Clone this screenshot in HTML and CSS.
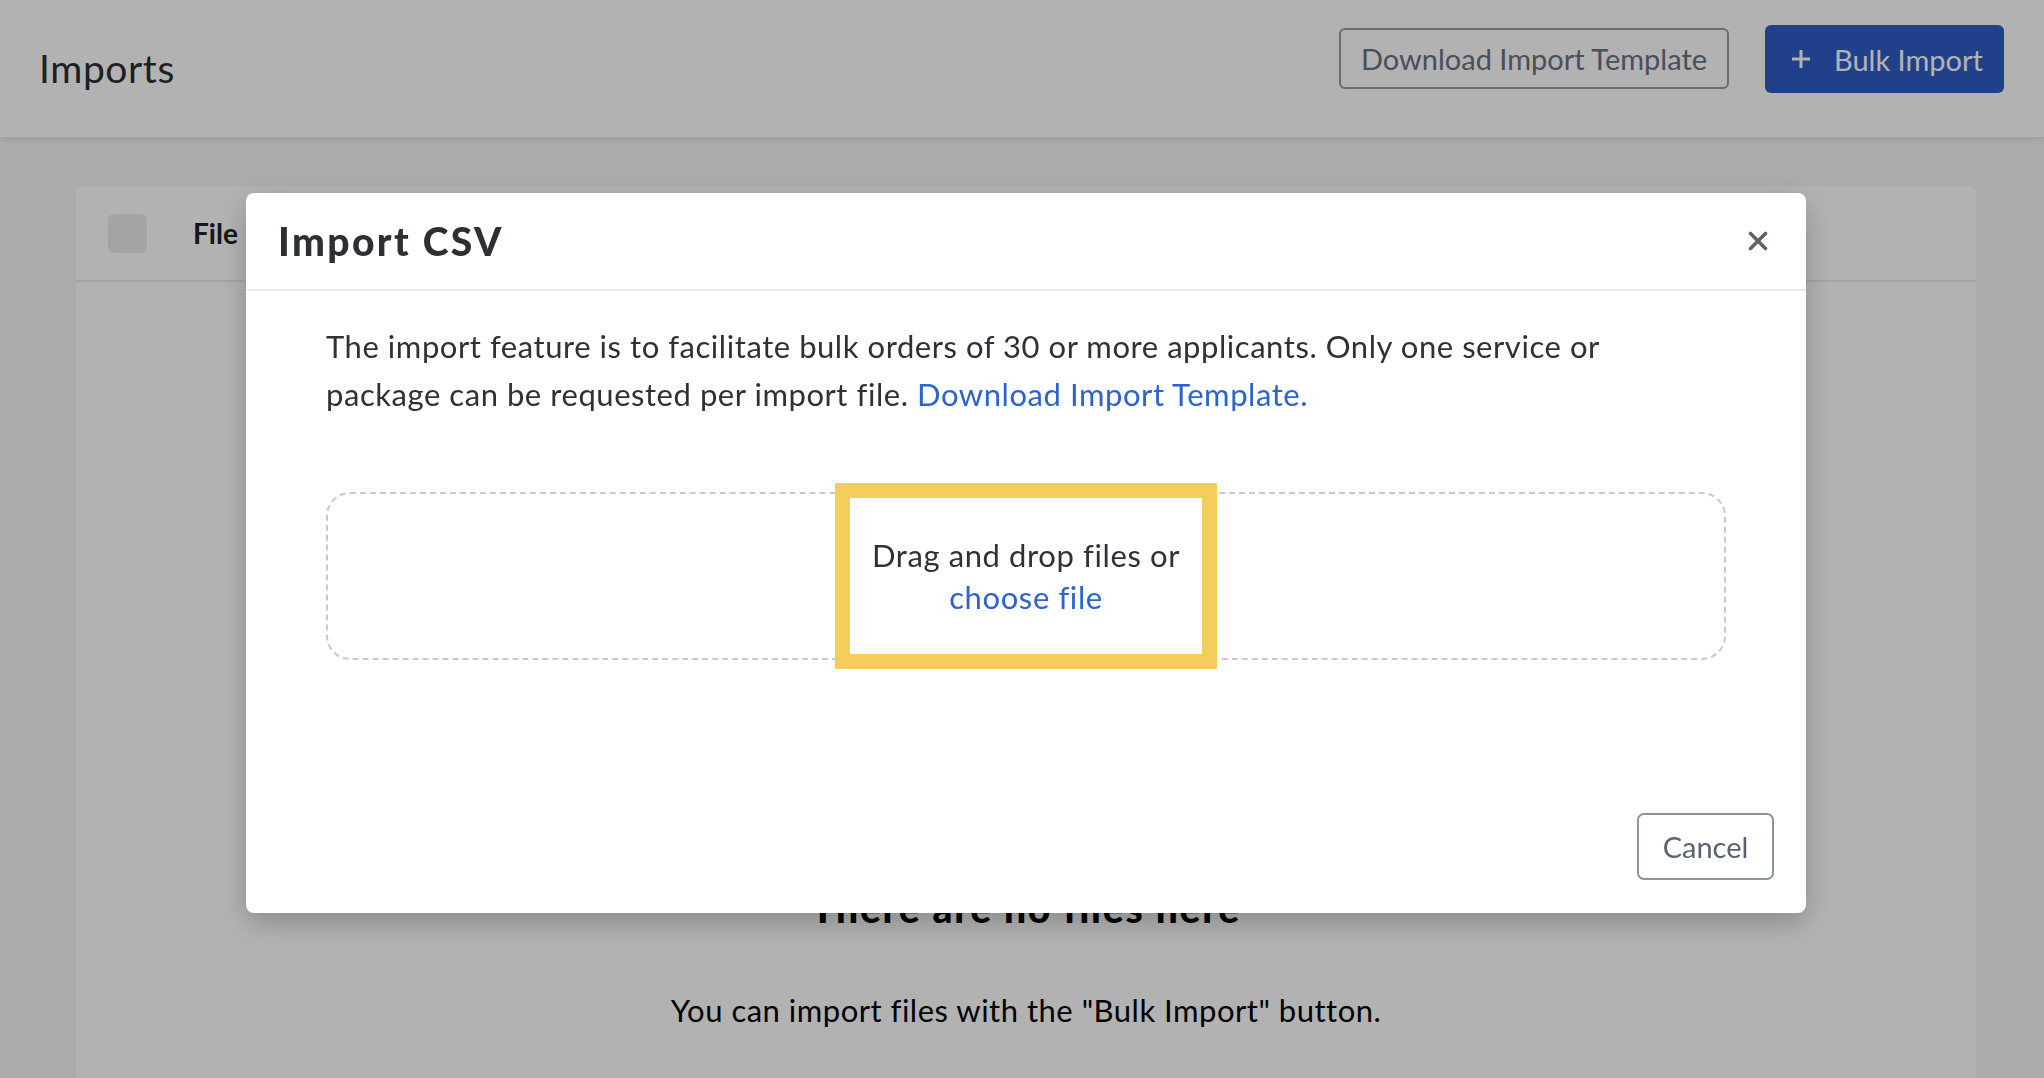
FILE: index.html
```html
<!DOCTYPE html>
<html lang="en">
<head>
<meta charset="utf-8">
<title>Imports</title>
<link rel="stylesheet" href="styles.css">
</head>
<body>
<header class="topbar">
  <h1 class="page-title">Imports</h1>
  <div class="actions">
    <button class="btn btn-outline">Download Import Template</button>
    <button class="btn btn-primary">
      <svg class="plus" viewBox="0 0 20 20" width="20" height="20"><path d="M10 1v18M1 10h18" stroke="#fff" stroke-width="3" fill="none"/></svg>
      <span>Bulk Import</span>
    </button>
  </div>
</header>

<main class="main">
  <section class="card">
    <div class="card-head">
      <span class="checkbox"></span>
      <span class="col-label">File</span>
    </div>
    <div class="empty">
      <h2 class="empty-title">There are no files here</h2>
      <p class="empty-text">You can import files with the "Bulk Import" button.</p>
    </div>
  </section>
</main>

<div class="backdrop">
  <div class="modal">
    <div class="modal-head">
      <h2 class="modal-title">Import CSV</h2>
      <svg class="close" viewBox="0 0 20 20" width="20" height="20"><path d="M2.5 2.5L17.5 17.5M17.5 2.5L2.5 17.5" stroke="#5d6470" stroke-width="3.6" stroke-linecap="round" fill="none"/></svg>
    </div>
    <div class="modal-body">
      <p class="intro">The import feature is to facilitate bulk orders of 30 or more applicants. Only one service or<br>package can be requested per import file. <a class="link" href="#">Download Import Template.</a></p>
      <div class="dropzone">
        <div class="drop-text">
          <span>Drag and drop files or</span>
          <a class="link" href="#">choose file</a>
        </div>
      </div>
    </div>
    <div class="modal-foot">
      <button class="btn-cancel">Cancel</button>
    </div>
  </div>
</div>
</body>
</html>
```
FILE: styles.css
```css
* { box-sizing: border-box; }
html, body { margin: 0; height: 100%; }
body {
  font-family: "Lato", "Noto Sans", sans-serif;
  background: #f5f5f5;
  color: #2e3136;
  overflow: hidden;
  display: flex;
  flex-direction: column;
}

.topbar {
  flex: none;
  height: 137px;
  background: #fff;
  box-shadow: 0 2px 6px rgba(0,0,0,0.10);
  display: flex;
  justify-content: space-between;
  align-items: flex-start;
  padding: 0 40px 0 39px;
  position: relative;
}
.page-title {
  margin: 0;
  font-size: 39px;
  font-weight: 400;
  letter-spacing: 0.6px;
  line-height: 137px;
  color: #2b2e33;
}
.actions {
  display: flex;
  align-items: flex-start;
  gap: 36px;
  padding-top: 25px;
}
.btn {
  font-family: inherit;
  font-size: 29px;
  border-radius: 6px;
  cursor: pointer;
  display: flex;
  align-items: center;
}
.btn-outline {
  margin-top: 3px;
  height: 61px;
  width: 390px;
  justify-content: center;
  background: #fff;
  border: 2px solid #969ba6;
  color: #6b7180;
}
.btn-primary {
  height: 68px;
  width: 239px;
  padding: 0 0 0 26px;
  gap: 23px;
  background: #2f5ec5;
  border: none;
  color: #fff;
}
.plus { flex: none; }

.main {
  flex: 1;
  min-height: 0;
  padding: 49px 68px 0 76px;
}
.card {
  background: #fff;
  border-radius: 6px 6px 0 0;
  height: 100%;
  overflow: hidden;
}
.card-head {
  height: 96px;
  border-bottom: 2px solid #e9e9eb;
  display: flex;
  align-items: center;
  padding-left: 32px;
  gap: 46px;
}
.checkbox {
  width: 39px;
  height: 39px;
  border-radius: 6px;
  background: #ebebeb;
}
.col-label {
  font-size: 28px;
  font-weight: 700;
  color: #202226;
}
.empty {
  text-align: center;
  padding-top: 603px;
  color: #000;
}
.empty-title {
  margin: 0;
  font-size: 39px;
  font-weight: 900;
  letter-spacing: 1.8px;
  line-height: 1.2;
}
.empty-text {
  margin: 60px 0 0;
  font-size: 31px;
  letter-spacing: 0.5px;
  line-height: 1.2;
}

.backdrop {
  position: fixed;
  inset: 0;
  background: rgba(0,0,0,0.3);
  padding: 193px 0 0 246px;
}
.modal {
  width: 1560px;
  height: 720px;
  background: #fff;
  border-radius: 8px;
  box-shadow: 0 10px 28px rgba(0,0,0,0.22);
  display: flex;
  flex-direction: column;
}
.modal-head {
  height: 98px;
  border-bottom: 2px solid #e8ecf0;
  display: flex;
  align-items: center;
  justify-content: space-between;
  padding: 0 38px 0 32px;
  flex: none;
}
.modal-title {
  margin: 0;
  font-size: 39px;
  font-weight: 900;
  letter-spacing: 2.4px;
  color: #2c2f34;
}
.close { flex: none; }
.modal-body {
  padding: 31px 80px 0;
}
.intro {
  margin: 0;
  font-size: 31px;
  letter-spacing: 0.55px;
  line-height: 48px;
}
.link {
  color: #2b63cf;
  text-decoration: none;
}
.dropzone {
  margin-top: 74px;
  height: 168px;
  border: 2px dashed #c9c9c9;
  border-radius: 24px;
  display: flex;
  align-items: center;
  justify-content: center;
}
.drop-text {
  flex: none;
  width: 382px;
  height: 186px;
  border: 15px solid #f5cd5b;
  background: #fff;
  display: flex;
  flex-direction: column;
  align-items: center;
  justify-content: center;
  font-size: 31px;
  letter-spacing: 0.6px;
  line-height: 42px;
}
.modal-foot {
  margin-top: auto;
  display: flex;
  justify-content: flex-end;
  padding: 0 32px 33px;
}
.btn-cancel {
  width: 137px;
  height: 67px;
  border: 2px solid #8e93a0;
  border-radius: 7px;
  background: #fff;
  color: #5b6272;
  font-family: inherit;
  font-size: 29px;
  cursor: pointer;
}
```
